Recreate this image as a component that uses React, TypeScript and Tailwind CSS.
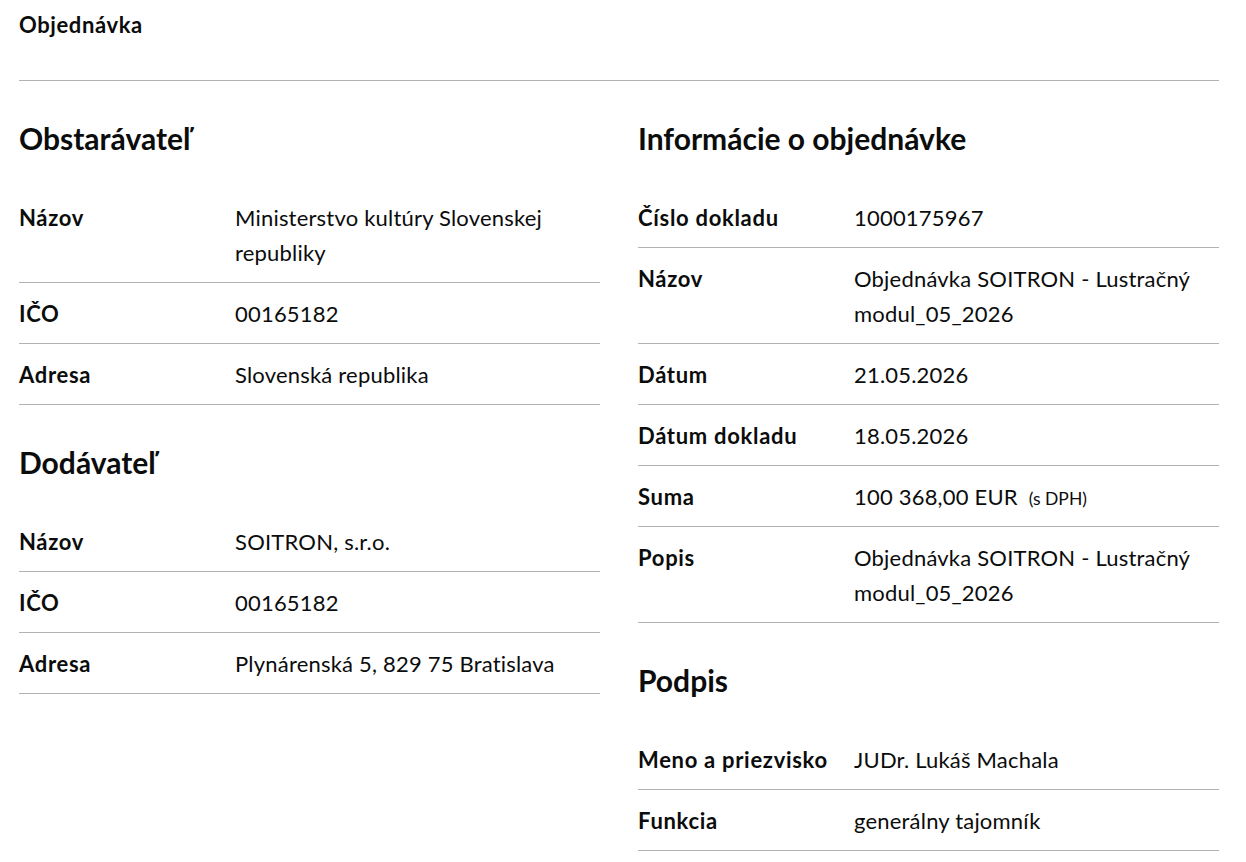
const font = { fontFamily: '"Lato", "Noto Sans", sans-serif' };

type Row = { label: string; value: React.ReactNode };

function Section({ title, rows }: { title: string; rows: Row[] }) {
  return (
    <section>
      <h2 className="mt-[40px] mb-[31px] text-[30px] leading-[35px] font-bold text-[#0b0c0c]">{title}</h2>
      <dl>
        {rows.map((r) => (
          <div key={r.label} className="flex border-b border-[#b1b4b6] pt-[13px] pb-[12px]">
            <dt className="w-[216px] shrink-0 pr-4 text-[22px] leading-[35px] font-bold tracking-[0.7px]">
              {r.label}
            </dt>
            <dd className="flex-1 text-[22px] leading-[35px] tracking-[0.2px]">{r.value}</dd>
          </div>
        ))}
      </dl>
    </section>
  );
}

export default function App() {
  return (
    <div className="min-h-screen bg-white text-[#0b0c0c]" style={font}>
      <div className="ml-[19px] w-[1200px]">
        <div className="border-b border-[#b1b4b6] pt-[12px] pb-[42px]">
          <h1 className="text-[22px] leading-[26px] font-bold tracking-[0.6px]">Objednávka</h1>
        </div>
        <div className="grid grid-cols-2 gap-x-[38px]">
          <div>
            <Section
              title="Obstarávateľ"
              rows={[
                { label: 'Názov', value: 'Ministerstvo kultúry Slovenskej republiky' },
                { label: 'IČO', value: '00165182' },
                { label: 'Adresa', value: 'Slovenská republika' },
              ]}
            />
            <Section
              title="Dodávateľ"
              rows={[
                { label: 'Názov', value: 'SOITRON, s.r.o.' },
                { label: 'IČO', value: '00165182' },
                { label: 'Adresa', value: 'Plynárenská 5, 829 75 Bratislava' },
              ]}
            />
          </div>
          <div>
            <Section
              title="Informácie o objednávke"
              rows={[
                { label: 'Číslo dokladu', value: '1000175967' },
                { label: 'Názov', value: 'Objednávka SOITRON - Lustračný modul_05_2026' },
                { label: 'Dátum', value: '21.05.2026' },
                { label: 'Dátum dokladu', value: '18.05.2026' },
                {
                  label: 'Suma',
                  value: (
                    <>
                      100 368,00 EUR{' '}
                      <span className="ml-[5px] align-baseline text-[17.5px] leading-[20px] tracking-normal">
                        (s DPH)
                      </span>
                    </>
                  ),
                },
                { label: 'Popis', value: 'Objednávka SOITRON - Lustračný modul_05_2026' },
              ]}
            />
            <Section
              title="Podpis"
              rows={[
                { label: 'Meno a priezvisko', value: 'JUDr. Lukáš Machala' },
                { label: 'Funkcia', value: 'generálny tajomník' },
              ]}
            />
          </div>
        </div>
      </div>
    </div>
  );
}
